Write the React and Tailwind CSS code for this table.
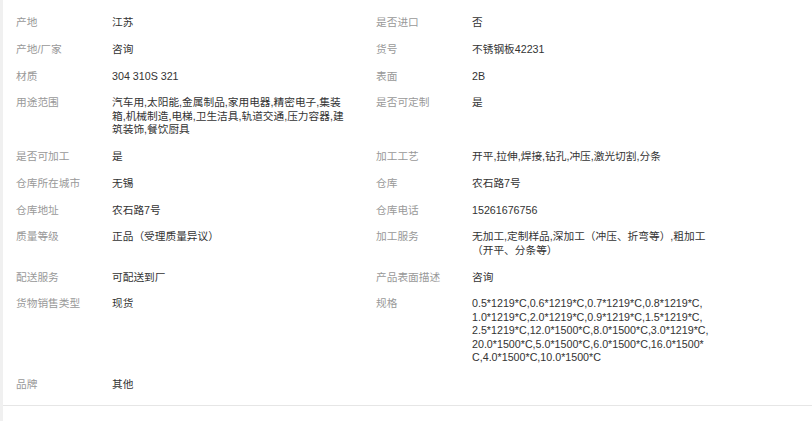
const rows = [
  [["产地", "江苏"], ["是否进口", "否"]],
  [["产地/厂家", "咨询"], ["货号", "不锈钢板42231"]],
  [["材质", "304 310S 321"], ["表面", "2B"]],
  [
    ["用途范围", "汽车用,太阳能,金属制品,家用电器,精密电子,集装箱,机械制造,电梯,卫生洁具,轨道交通,压力容器,建筑装饰,餐饮厨具"],
    ["是否可定制", "是"],
  ],
  [["是否可加工", "是"], ["加工工艺", "开平,拉伸,焊接,钻孔,冲压,激光切割,分条"]],
  [["仓库所在城市", "无锡"], ["仓库", "农石路7号"]],
  [["仓库地址", "农石路7号"], ["仓库电话", "15261676756"]],
  [["质量等级", "正品（受理质量异议）"], ["加工服务", "无加工,定制样品,深加工（冲压、折弯等）,粗加工（开平、分条等）"]],
  [["配送服务", "可配送到厂"], ["产品表面描述", "咨询"]],
  [
    ["货物销售类型", "现货"],
    [
      "规格",
      [
        "0.5*1219*C,0.6*1219*C,0.7*1219*C,0.8*1219*C,",
        "1.0*1219*C,2.0*1219*C,0.9*1219*C,1.5*1219*C,",
        "2.5*1219*C,12.0*1500*C,8.0*1500*C,3.0*1219*C,",
        "20.0*1500*C,5.0*1500*C,6.0*1500*C,16.0*1500*",
        "C,4.0*1500*C,10.0*1500*C",
      ],
    ],
  ],
  [["品牌", "其他"]],
];

function Item({ label, value }) {
  return (
    <div className="flex w-[360px]">
      <div className="w-[96px] shrink-0 text-[#999999]">{label}</div>
      <div className="w-[234px] text-[#333333] break-all">
        {Array.isArray(value)
          ? value.map((line) => (
              <div key={line} className="whitespace-nowrap">
                {line}
              </div>
            ))
          : value}
      </div>
    </div>
  );
}

export default function App() {
  return (
    <div className="min-h-screen bg-[#f0f0f0] pl-[3px] font-['Liberation_Sans','Noto_Sans_CJK_SC',sans-serif]">
      <div className="bg-white min-h-[421px]">
        <div className="pt-[16px] pl-[13px] border-b border-[#e6e6e6] text-[10.7px] leading-[13.4px]">
          {rows.map((row, i) => (
            <div key={i} className="flex pb-[13.4px]">
              {row.map(([label, value]) => (
                <Item key={label} label={label} value={value} />
              ))}
            </div>
          ))}
        </div>
      </div>
    </div>
  );
}
